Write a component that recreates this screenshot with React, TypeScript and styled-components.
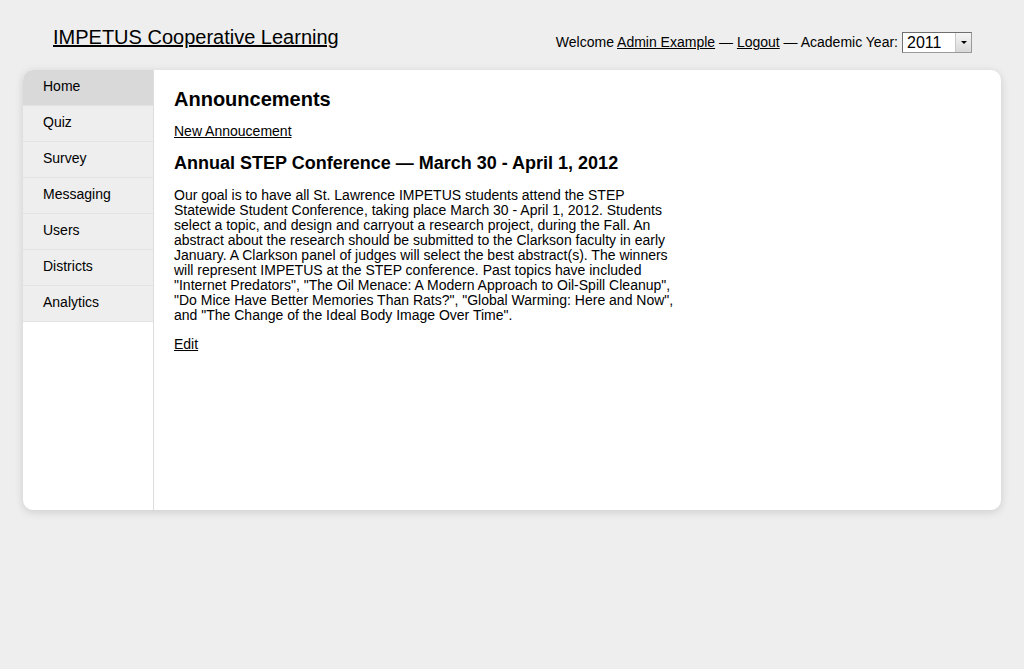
import React from "react";
import styled, { createGlobalStyle } from "styled-components";

const Global = createGlobalStyle`
  html, body { margin: 0; padding: 0; background: #eeeeee; }
  body { font-family: "Liberation Sans", Arial, Helvetica, sans-serif; color: #000; }
  a { color: #000; }
`;

const Page = styled.div`
  width: 1024px;
  min-height: 669px;
  box-sizing: border-box;
  padding: 0 23px;
`;

const Header = styled.header`
  display: flex;
  justify-content: space-between;
  align-items: flex-start;
  height: 70px;
`;

const Title = styled.a`
  display: block;
  margin: 25px 0 0 30px;
  font-size: 20px;
  line-height: 24px;
  color: #000;
`;

const UserBar = styled.div`
  display: flex;
  align-items: center;
  margin: 31px 29px 0 0;
  font-size: 14px;
  line-height: 21px;
`;

const UserText = styled.span`
  padding-top: 1px;
  white-space: pre;
`;

const Select = styled.div`
  display: flex;
  width: 70px;
  height: 21px;
  box-sizing: border-box;
  border: 1px solid #6f6f6f;
  border-right-color: #9a9a9a;
  border-bottom-color: #9a9a9a;
  background: #fff;
  margin-left: 4px;
`;

const SelectValue = styled.span`
  flex: 1;
  font-size: 16px;
  line-height: 19px;
  padding-left: 4px;
`;

const SelectButton = styled.span`
  width: 15px;
  display: flex;
  align-items: center;
  justify-content: center;
  background: linear-gradient(#f6f6f6, #d8d8d8);
  border-left: 1px solid #c8c8c8;
  &::after {
    content: "";
    border-left: 3px solid transparent;
    border-right: 3px solid transparent;
    border-top: 3px solid #000;
  }
`;

const Card = styled.div`
  display: flex;
  height: 440px;
  background: #fff;
  border-radius: 10px;
  box-shadow: 0 2px 8px rgba(0, 0, 0, 0.14);
  overflow: hidden;
`;

const Sidebar = styled.nav`
  width: 130px;
  flex-shrink: 0;
  border-right: 1px solid #dddddd;
  display: flex;
  flex-direction: column;
`;

const NavItem = styled.a<{ $active?: boolean }>`
  display: block;
  height: 35px;
  line-height: 33px;
  padding-left: 20px;
  font-size: 14px;
  color: #000;
  text-decoration: none;
  background: ${(p) => (p.$active ? "#d9d9d9" : "#eeeeee")};
  border-bottom: 1px solid #e2e2e2;
`;

const Content = styled.main`
  flex: 1;
  padding: 17px 20px 0 20px;
`;

const H2 = styled.h2`
  margin: 0 0 12px 0;
  font-size: 20px;
  line-height: 24px;
  font-weight: bold;
`;

const LinkLine = styled.div`
  font-size: 14px;
  line-height: 17px;
  margin-bottom: 12px;
`;

const H3 = styled.h3`
  margin: 0 0 14px 0;
  font-size: 18px;
  line-height: 22px;
  font-weight: bold;
`;

const Para = styled.p`
  margin: 0 0 13px 0;
  width: 505px;
  font-size: 14px;
  line-height: 15px;
`;

const navItems = ["Home", "Quiz", "Survey", "Messaging", "Users", "Districts", "Analytics"];

export default function App() {
  return (
    <Page>
      <Global />
      <Header>
        <Title href="#">IMPETUS Cooperative Learning</Title>
        <UserBar>
          <UserText>
            Welcome <a href="#">Admin Example</a> — <a href="#">Logout</a> — Academic Year:
          </UserText>
          <Select>
            <SelectValue>2011</SelectValue>
            <SelectButton />
          </Select>
        </UserBar>
      </Header>
      <Card>
        <Sidebar>
          {navItems.map((n, i) => (
            <NavItem key={n} href="#" $active={i === 0}>
              {n}
            </NavItem>
          ))}
        </Sidebar>
        <Content>
          <H2>Announcements</H2>
          <LinkLine>
            <a href="#">New Annoucement</a>
          </LinkLine>
          <H3>Annual STEP Conference — March 30 - April 1, 2012</H3>
          <Para>
            Our goal is to have all St. Lawrence IMPETUS students attend the STEP Statewide Student
            Conference, taking place March 30 - April 1, 2012. Students select a topic, and design and
            carryout a research project, during the Fall. An abstract about the research should be
            submitted to the Clarkson faculty in early January. A Clarkson panel of judges will select
            the best abstract(s). The winners will represent IMPETUS at the STEP conference. Past
            topics have included "Internet Predators", "The Oil Menace: A Modern Approach to
            Oil-Spill Cleanup", "Do Mice Have Better Memories Than Rats?", "Global Warming: Here and
            Now", and "The Change of the Ideal Body Image Over Time".
          </Para>
          <LinkLine>
            <a href="#">Edit</a>
          </LinkLine>
        </Content>
      </Card>
    </Page>
  );
}
